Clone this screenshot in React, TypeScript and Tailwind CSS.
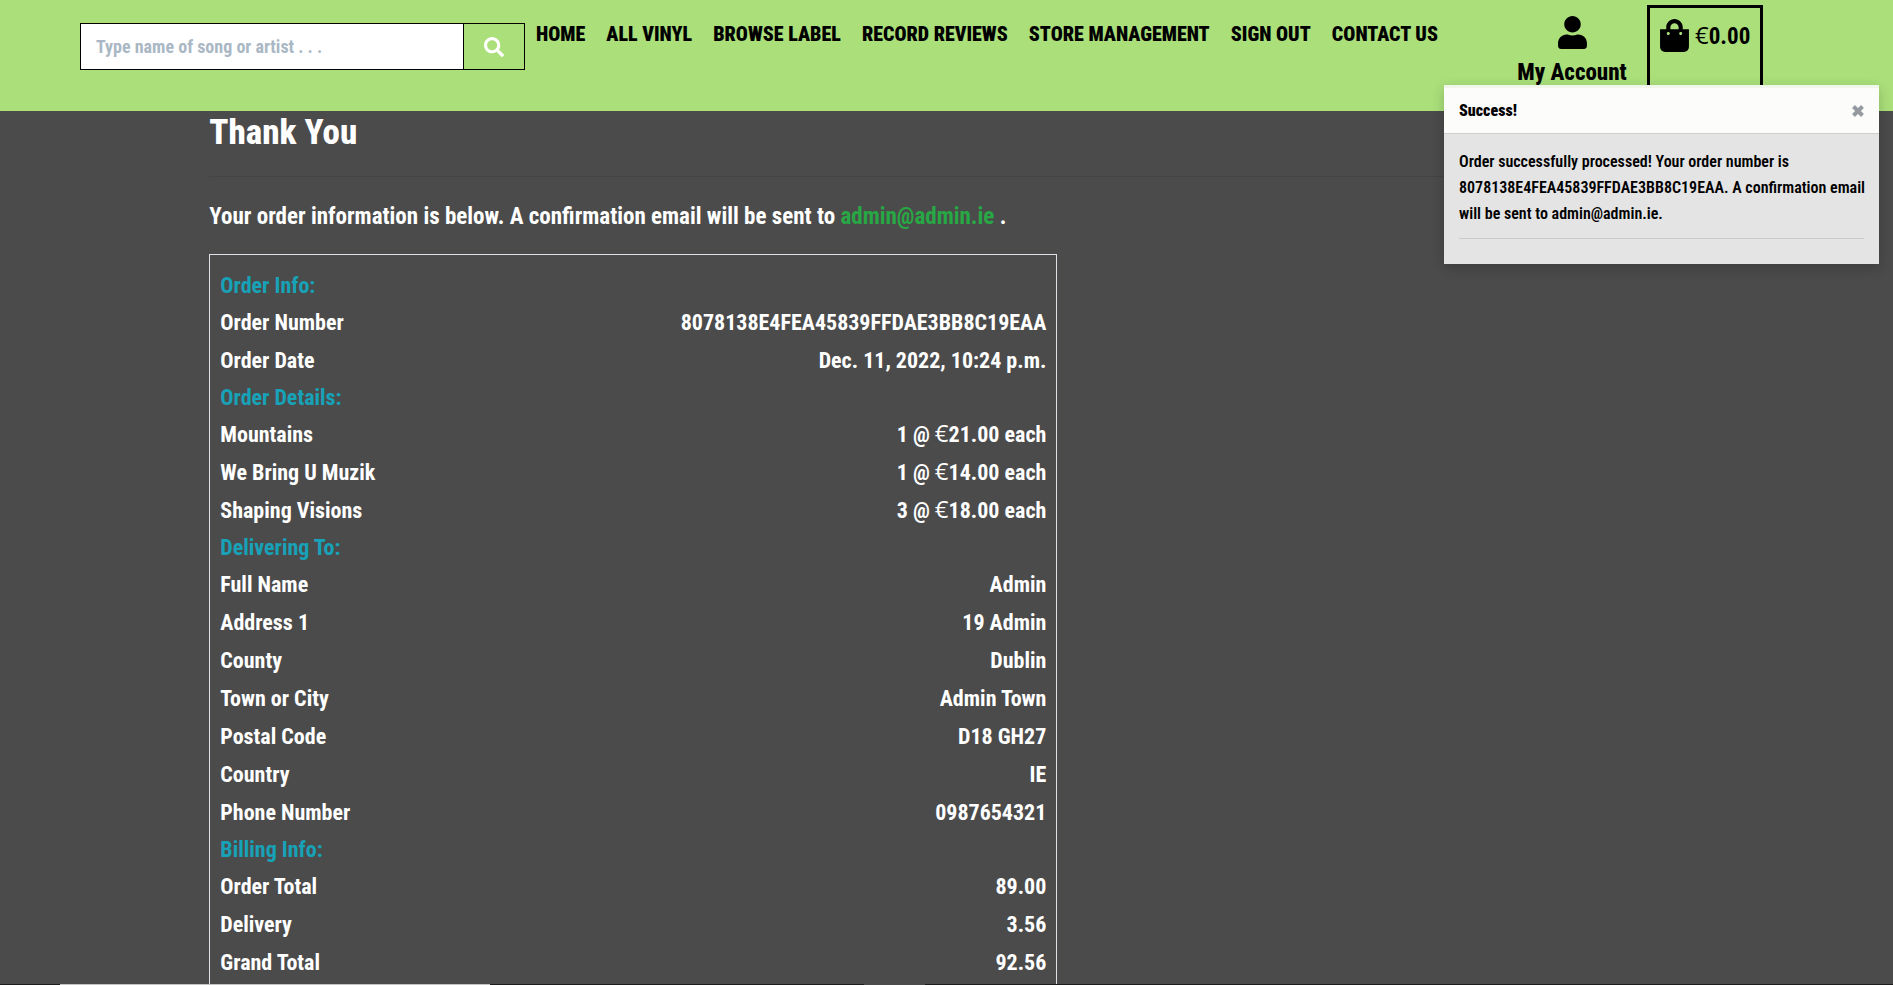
import React from "react";
import { FaSearch, FaUser, FaShoppingBag } from "react-icons/fa";

const navItems = [
  "HOME",
  "ALL VINYL",
  "BROWSE LABEL",
  "RECORD REVIEWS",
  "STORE MANAGEMENT",
  "SIGN OUT",
  "CONTACT US",
];

type Section = { title: string; rows: [string, string][] };

const sections: Section[] = [
  {
    title: "Order Info:",
    rows: [
      ["Order Number", "8078138E4FEA45839FFDAE3BB8C19EAA"],
      ["Order Date", "Dec. 11, 2022, 10:24 p.m."],
    ],
  },
  {
    title: "Order Details:",
    rows: [
      ["Mountains", "1 @ €21.00 each"],
      ["We Bring U Muzik", "1 @ €14.00 each"],
      ["Shaping Visions", "3 @ €18.00 each"],
    ],
  },
  {
    title: "Delivering To:",
    rows: [
      ["Full Name", "Admin"],
      ["Address 1", "19 Admin"],
      ["County", "Dublin"],
      ["Town or City", "Admin Town"],
      ["Postal Code", "D18 GH27"],
      ["Country", "IE"],
      ["Phone Number", "0987654321"],
    ],
  },
  {
    title: "Billing Info:",
    rows: [
      ["Order Total", "89.00"],
      ["Delivery", "3.56"],
      ["Grand Total", "92.56"],
    ],
  },
];

function Price({ text }: { text: string }) {
  const [before, after] = text.split("€");
  if (after === undefined) return <>{text}</>;
  return (
    <>
      {before}
      <span className="font-['Open_Sans',sans-serif] text-2xl leading-none font-normal">€</span>
      {after}
    </>
  );
}

function SearchForm() {
  return (
    <form className="mt-[23px] ml-20 flex h-[47px] w-[445px] shrink-0 border border-black" onSubmit={(e) => e.preventDefault()}>
      <input
        type="search"
        aria-label="Search"
        placeholder="Type name of song or artist . . ."
        className="min-w-0 flex-1 bg-white px-[15px] text-lg font-bold text-black outline-none placeholder:text-[#aab7c4]"
      />
      <button type="submit" aria-label="Submit search" className="flex w-[61px] items-center justify-center border-l border-black text-white">
        <FaSearch className="size-5" />
      </button>
    </form>
  );
}

function Header() {
  return (
    <header className="flex h-[111px] shrink-0 items-start bg-[#aadf7a] text-black">
      <SearchForm />
      <nav className="mt-4 ml-[11px] flex w-[902px] shrink-0 justify-between text-xl leading-9 font-black whitespace-nowrap">
        {navItems.map((item) => (
          <a key={item} href="#">
            {item}
          </a>
        ))}
      </nav>
      <a href="#" className="mt-4 ml-[78px] flex w-[112px] shrink-0 flex-col items-center text-[23px] leading-9 font-extrabold whitespace-nowrap">
        <FaUser className="mb-1.5 size-[33px]" />
        My Account
      </a>
      <a href="#" className="mt-[5px] ml-[19px] flex h-24 w-[116px] shrink-0 items-start border-[3px] border-black pt-[11px] pl-2 text-[23px] leading-9 font-bold">
        <FaShoppingBag className="size-[33px] shrink-0" />
        <span className="pl-1">
          <Price text="€0.00" />
        </span>
      </a>
    </header>
  );
}

function Toast() {
  return (
    <div role="alert" className="absolute top-[85px] right-3.5 w-[435px] bg-[#e4e4e4] text-black shadow-[0_4px_12px_rgba(0,0,0,0.2)]">
      <div className="flex h-[49px] items-center justify-between border-t-[3px] border-b border-t-[#f1f6ea] border-b-[#cfcfcf] bg-[#fcfcfb] px-[15px]">
        <strong className="text-base font-black">Success!</strong>
        <button type="button" aria-label="Close" className="text-[#949a9f]">
          <svg viewBox="0 0 12 12" className="size-3" fill="none" stroke="currentColor" strokeWidth="4">
            <path d="M1.5 1.5 10.5 10.5M10.5 1.5 1.5 10.5" />
          </svg>
        </button>
      </div>
      <div className="px-[15px] pt-[15px] pb-[25px]">
        <p className="text-base leading-[26px] font-semibold whitespace-nowrap">
          Order successfully processed! Your order number is
          <br />
          8078138E4FEA45839FFDAE3BB8C19EAA. A confirmation email
          <br />
          will be sent to admin@admin.ie.
        </p>
        <hr className="mt-[11px] border-[#cacaca]" />
      </div>
    </div>
  );
}

export default function App() {
  return (
    <div className="relative flex h-screen flex-col overflow-hidden bg-[#4b4b4b] font-['Roboto_Condensed','Roboto',sans-serif] text-white">
      <Header />
      <main className="mx-auto min-h-0 w-4/5 flex-1 overflow-hidden px-5">
        <h1 className="text-[35px] leading-[44px] font-extrabold">Thank You</h1>
        <hr className="mt-[21px] border-[#444444]" />
        <p className="mt-[22px] text-[23px] leading-9 font-bold">
          Your order information is below. A confirmation email will be sent to{" "}
          <span className="text-[#28a745]">admin@admin.ie</span> .
        </p>
        <div className="mt-[19px] w-7/12 pr-3">
          <div className="border border-[#dee2e6] px-2.5 pt-[13px] pb-6 text-[22px] font-bold">
            {sections.map((section) => (
              <section key={section.title}>
                <h2 className="leading-9 text-[#17a2b8]">{section.title}</h2>
                <dl>
                  {section.rows.map(([label, value]) => (
                    <div key={label} className="flex h-[38px] justify-between leading-[38px]">
                      <dt>{label}</dt>
                      <dd>
                        <Price text={value} />
                      </dd>
                    </div>
                  ))}
                </dl>
              </section>
            ))}
          </div>
        </div>
      </main>
      <div className="flex h-px shrink-0 bg-[#1c1c1c]">
        <div className="ml-[60px] w-[430px] bg-[#c4c4c4]" />
        <div className="ml-[374px] w-[61px] bg-[#4b4b4b]" />
      </div>
      <Toast />
    </div>
  );
}
